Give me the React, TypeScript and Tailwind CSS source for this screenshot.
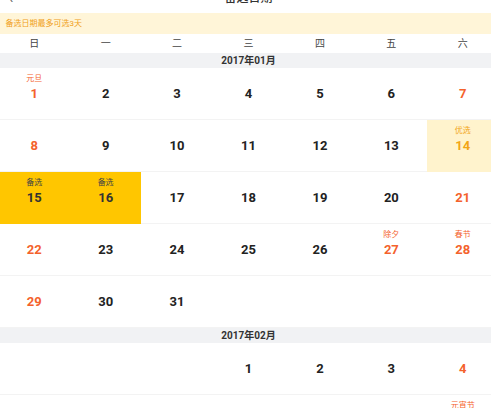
import React from "react";

type Day = {
  n: number;
  label?: string;
  holiday?: boolean;
  state?: "picked" | "best";
};

type Month = { title: string; offset: number; days: Day[] };

const janLabels: Record<number, string> = { 1: "元旦", 27: "除夕", 28: "春节" };
const febLabels: Record<number, string> = { 11: "元宵节" };

function buildMonth(
  title: string,
  offset: number,
  count: number,
  labels: Record<number, string>,
  extra: Record<number, Day["state"]> = {}
): Month {
  const days: Day[] = [];
  for (let i = 1; i <= count; i++) {
    const col = (offset + i - 1) % 7;
    days.push({
      n: i,
      label: labels[i],
      holiday: col === 0 || col === 6 || !!labels[i],
      state: extra[i],
    });
  }
  return { title, offset, days };
}

const months: Month[] = [
  buildMonth("2017年01月", 0, 31, janLabels, { 14: "best", 15: "picked", 16: "picked" }),
  buildMonth("2017年02月", 3, 28, febLabels),
];

const weekdays = ["日", "一", "二", "三", "四", "五", "六"];

function DayCell({ d }: { d?: Day }) {
  if (!d) return <div className="h-[52px]" />;

  let bg = "";
  let num = d.holiday ? "text-[#f4622c]" : "text-[#222]";
  let lab = "text-[#f4622c]";
  let label = d.label;

  if (d.state === "picked") {
    bg = "bg-[#ffc600]";
    num = "text-[#333]";
    lab = "text-[#444]";
    label = "备选";
  } else if (d.state === "best") {
    bg = "bg-[#fff3cd]";
    num = "text-[#f2a516]";
    lab = "text-[#f2a516]";
    label = "优选";
  }

  return (
    <div className={`h-[52px] flex flex-col items-center justify-center ${bg}`}>
      <span className={`h-[12px] text-[8px] leading-[10px] ${lab}`}>{label}</span>
      <span className={`text-[13px] leading-[16px] font-bold ${num}`}>{d.n}</span>
      <span className="h-[13px]" />
    </div>
  );
}

function MonthBlock({ m }: { m: Month }) {
  const cells: (Day | undefined)[] = [];
  for (let i = 0; i < m.offset; i++) cells.push(undefined);
  m.days.forEach((d) => cells.push(d));
  while (cells.length % 7) cells.push(undefined);

  const rows: (Day | undefined)[][] = [];
  for (let i = 0; i < cells.length; i += 7) rows.push(cells.slice(i, i + 7));

  return (
    <section>
      <div className="h-[15px] bg-[#f1f2f4] flex items-center justify-center text-[10px] font-bold text-[#333]">
        {m.title}
      </div>
      {rows.map((row, i) => (
        <div
          key={i}
          className="grid grid-cols-7 shadow-[inset_0_-1px_0_#f3f3f3]"
        >
          {row.map((d, j) => (
            <DayCell key={j} d={d} />
          ))}
        </div>
      ))}
    </section>
  );
}

export default function App() {
  return (
    <main className="w-[491px] h-[408px] overflow-hidden bg-white">
      <div
        className="w-[500px] -ml-[1.5px]"
        style={{ fontFamily: "Roboto, 'Noto Sans CJK SC', sans-serif" }}
      >
        <header className="-mt-[17px] h-[30px] relative flex items-center justify-center">
          <span className="absolute left-[10px] text-[16px] text-[#666]">‹</span>
          <h1 className="text-[12px] font-medium text-[#333]">备选日期</h1>
        </header>

        <div className="h-[21px] bg-[#fff5d8] flex items-center px-[7px] text-[8px] text-[#f0a020]">
          备选日期最多可选3天
        </div>

        <div className="h-[19px] grid grid-cols-7 items-center text-[10px] text-[#444]">
          {weekdays.map((w) => (
            <div key={w} className="text-center">
              {w}
            </div>
          ))}
        </div>

        {months.map((m) => (
          <MonthBlock key={m.title} m={m} />
        ))}
      </div>
    </main>
  );
}
